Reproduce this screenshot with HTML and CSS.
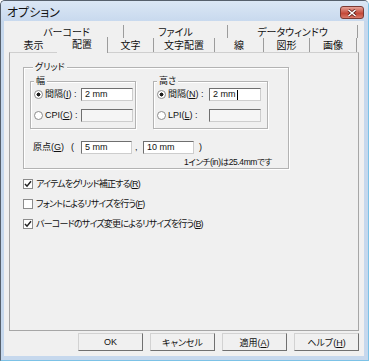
FILE: index.html
```html
<!DOCTYPE html>
<html lang="ja">
<head>
    <meta charset="UTF-8">
    <title>オプション</title>
    <link rel="stylesheet" href="styles.css">
</head>
<body>
    <div class="window">
        <div class="titlebar">
            <span class="title">オプション</span>
            <span class="close">
                <svg width="10" height="8" viewBox="0 0 10 8"><path d="M1.5 1 L8.5 7 M8.5 1 L1.5 7" stroke="#5a1d18" stroke-width="3"/><path d="M1.5 1 L8.5 7 M8.5 1 L1.5 7" stroke="#fff" stroke-width="1.6"/></svg>
            </span>
        </div>

        <div class="client">
            <div class="tab-row back">
                <div class="tab t1">バーコード</div>
                <div class="tab t2">ファイル</div>
                <div class="tab t3">データウィンドウ</div>
            </div>
            <div class="tab-row front">
                <div class="tab f1 plain">表示</div>
                <div class="tab f2 active">配置</div>
                <div class="tab f3">文字</div>
                <div class="tab f4">文字配置</div>
                <div class="tab f5">線</div>
                <div class="tab f6">図形</div>
                <div class="tab f7">画像</div>
            </div>

            <div class="page">
                <div class="group grid">
                    <span class="group-title">グリッド</span>
                    <div class="pair">
                        <div class="group sub width">
                            <span class="group-title">幅</span>
                            <div class="opts">
                                <span class="radio on"></span><span class="lbl">間隔(<u>I</u>) :</span><span class="field">2 mm</span>
                                <span class="radio"></span><span class="lbl">CPI(<u>C</u>) :</span><span class="field off"></span>
                            </div>
                        </div>
                        <div class="group sub height">
                            <span class="group-title">高さ</span>
                            <div class="opts">
                                <span class="radio on"></span><span class="lbl">間隔(<u>N</u>) :</span><span class="field">2 mm<span class="caret"></span></span>
                                <span class="radio"></span><span class="lbl">LPI(<u>L</u>) :</span><span class="field off"></span>
                            </div>
                        </div>
                    </div>
                    <div class="origin">
                        <span class="olbl">原点(<u>G</u>)</span>
                        <span class="paren">(</span>
                        <span class="field">5 mm</span>
                        <span class="comma">,</span>
                        <span class="field">10 mm</span>
                        <span class="paren close-paren">)</span>
                    </div>
                    <div class="note">1インチ(in)は25.4mmです</div>
                </div>

                <div class="checks">
                    <div class="check-row">
                        <span class="box"><svg width="8" height="8" viewBox="0 0 8 8"><path d="M1 4 L3 6.2 L7 1.2" fill="none" stroke="#222" stroke-width="1.5"/></svg></span>
                        <span class="check-text">アイテムをグリッド補正する(<u>R</u>)</span>
                    </div>
                    <div class="check-row">
                        <span class="box"></span>
                        <span class="check-text">フォントによるリサイズを行う(<u>F</u>)</span>
                    </div>
                    <div class="check-row">
                        <span class="box"><svg width="8" height="8" viewBox="0 0 8 8"><path d="M1 4 L3 6.2 L7 1.2" fill="none" stroke="#222" stroke-width="1.5"/></svg></span>
                        <span class="check-text">バーコードのサイズ変更によるリサイズを行う(<u>B</u>)</span>
                    </div>
                </div>
            </div>

            <div class="buttons">
                <button>OK</button>
                <button>キャンセル</button>
                <button>適用(<u>A</u>)</button>
                <button>ヘルプ(<u>H</u>)</button>
            </div>
        </div>
    </div>
</body>
</html>
```

FILE: styles.css
```css
body { margin: 0; background: #fff; font-family: "Liberation Sans", "Noto Sans CJK JP", sans-serif; font-size: 9px; color: #111; font-feature-settings: "palt" 1; }
u { text-decoration: underline; text-underline-offset: 1px; }

.window {
    width: 369px;
    height: 361px;
    box-sizing: border-box;
    border: 1px solid;
    border-color: #56606c #7cc2e6 #7cc2e6 #56606c;
    border-radius: 5px 5px 0 0;
    background: #c6d8ed;
    display: flex;
    flex-direction: column;
}
.titlebar {
    height: 20px;
    display: flex;
    justify-content: space-between;
    align-items: flex-start;
    padding: 0 4px 0 6px;
    background: linear-gradient(#dbe7f5, #c8d9ee);
    border-radius: 4px 4px 0 0;
}
.title { font-size: 12px; line-height: 14px; margin-top: 5px; }
.close {
    width: 24px;
    height: 13px;
    margin-top: 5px;
    box-sizing: border-box;
    border: 1px solid #7b3a33;
    border-radius: 3px;
    background: linear-gradient(#e6a398, #c95546 50%, #c0412f 51%, #d9796a);
    display: flex;
    align-items: center;
    justify-content: center;
}

.client {
    height: 335px;
    margin: 0 4px 0 3px;
    box-sizing: border-box;
    padding: 4px 5px 5px 5px;
    background: #f0f0f0;
    display: flex;
    flex-direction: column;
}

.tab-row { display: flex; margin-left: 1px; font-size: 10px; }
.tab {
    box-sizing: border-box;
    text-align: center;
    border-right: 1px solid #9c9c9c;
    background: #f0f0f0;
}
.back { height: 13px; }
.back .tab { line-height: 12px; padding-top: 2px; }
.front { height: 14px; margin-right: 1px; }
.front .tab { line-height: 13px; padding-top: 1px; }
.t1 { width: 114px; }
.t2 { width: 104px; }
.t3 { width: 130px; }
.f1 { width: 47px; }
.f2 { width: 51px; }
.f3 { width: 46px; }
.f4 { width: 61px; }
.f5 { width: 49px; }
.f6 { width: 46px; }
.f7 { width: 47px; }
.tab.plain { border-right: none; }
.tab.active { height: 16px; margin-top: -1px; position: relative; z-index: 1; }

.page {
    height: 279px;
    box-sizing: border-box;
    border: 1px solid #a6a6a6;
    border-top-color: #cfcfcf;
    padding: 0 0 0 13px;
}

.group {
    border: 1px solid #b3b3b3;
    box-shadow: inset 1px 1px 0 #fff, 1px 1px 0 #fff;
}
.group-title {
    display: block;
    width: max-content;
    margin: -7px 0 0 3px;
    padding: 0 2px;
    line-height: 12px;
    background: #f0f0f0;
}
.grid { width: 266px; box-sizing: border-box; margin-top: 14px; padding: 0 0 0 6px; }

.pair { display: flex; gap: 17px; margin-top: 8px; }
.sub { box-sizing: border-box; height: 48px; }
.sub.width { width: 106px; }
.sub.height { width: 115px; }
.opts {
    display: grid;
    grid-template-columns: 9px 1fr 52px;
    grid-auto-rows: 13px;
    column-gap: 2px;
    row-gap: 8px;
    align-items: center;
    padding: 1px 2px 0 3px;
}
.sub.height .opts { padding-right: 6px; }
.lbl { line-height: 13px; white-space: nowrap; }

.radio {
    width: 9px;
    height: 9px;
    box-sizing: border-box;
    border: 1px solid #8c8c8c;
    border-radius: 50%;
    background: #fff;
}
.radio.on { background: radial-gradient(circle, #1e1e1e 0 1.8px, #fff 2.2px); }

.field {
    display: flex;
    align-items: center;
    height: 13px;
    box-sizing: border-box;
    border: 1px solid;
    border-color: #6f6f6f #cdcdcd #cdcdcd #6f6f6f;
    background: #fff;
    padding-left: 3px;
    line-height: 11px;
    white-space: nowrap;
}
.field.off { background: #f5f5f5; }
.caret { width: 1px; height: 10px; background: #000; margin-left: 1px; }

.origin {
    display: grid;
    grid-template-columns: 37px 11px 51px 11px 51px auto;
    align-items: center;
    height: 13px;
    margin-top: 12px;
    padding-left: 3px;
    line-height: 13px;
    white-space: nowrap;
}
.paren { padding-left: 1px; }
.comma { padding-left: 3px; }
.close-paren { padding-left: 5px; }
.note { margin-top: 3px; padding-left: 154px; line-height: 11px; font-size: 8.5px; letter-spacing: -0.4px; white-space: nowrap; }

.checks { display: flex; flex-direction: column; gap: 6px; margin-top: 8px; }
.check-row { display: flex; align-items: center; gap: 3px; height: 14px; line-height: 14px; white-space: nowrap; }
.check-text { letter-spacing: -0.8px; }
.box {
    width: 10px;
    height: 10px;
    box-sizing: border-box;
    border: 1px solid #8c8c8c;
    background: #fff;
    display: flex;
    align-items: center;
    justify-content: center;
}

.buttons { display: flex; justify-content: flex-end; gap: 7px; margin-top: 2px; }
button {
    width: 65px;
    height: 18px;
    padding: 0;
    font: inherit;
    color: #111;
    border: 1px solid;
    border-color: #d2d2d2 #707070 #707070 #d2d2d2;
    background: #f0f0f0;
}
```
